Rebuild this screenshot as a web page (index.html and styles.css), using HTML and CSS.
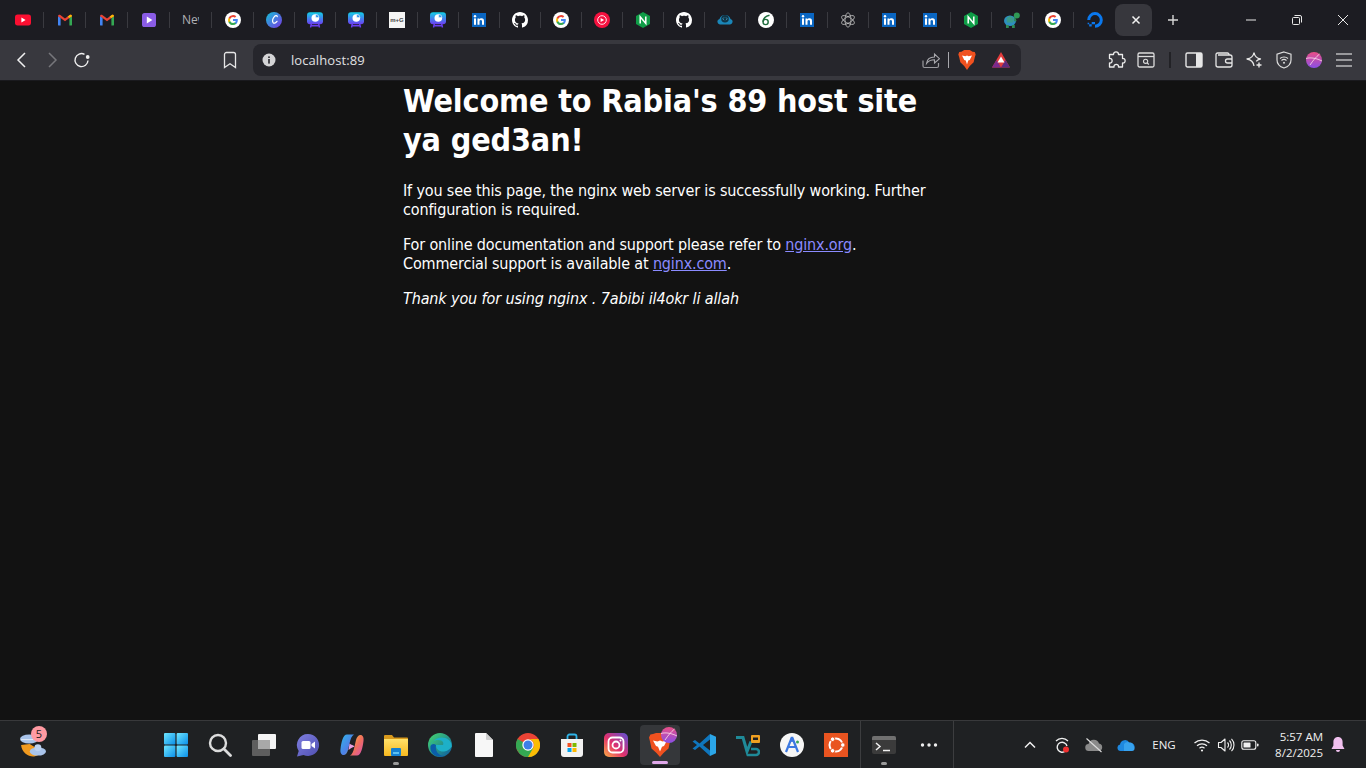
FILE: index.html
```html
<!DOCTYPE html>
<html lang="en">
<head>
<meta charset="utf-8">
<title>Welcome to nginx!</title>
<link rel="stylesheet" href="styles.css">
</head>
<body>
<svg class="defs" aria-hidden="true">
  <defs>
    <linearGradient id="gPresent" x1="0" y1="0" x2="0" y2="1"><stop offset="0" stop-color="#12cfe6"/><stop offset="1" stop-color="#6d3df2"/></linearGradient>
    <linearGradient id="gCanva" x1="0" y1="0" x2="1" y2="1"><stop offset="0" stop-color="#12c4d6"/><stop offset="1" stop-color="#7b34e6"/></linearGradient>
    <linearGradient id="gStart" x1="0" y1="0" x2="1" y2="1"><stop offset="0" stop-color="#6fe6ff"/><stop offset="1" stop-color="#0a8fe8"/></linearGradient>
    <linearGradient id="gMeet" x1="0" y1="0" x2="1" y2="1"><stop offset="0" stop-color="#7f7fe0"/><stop offset="1" stop-color="#4f4fb0"/></linearGradient>
    <linearGradient id="gInsta" x1="0" y1="1" x2="1" y2="0"><stop offset="0" stop-color="#fcb045"/><stop offset=".45" stop-color="#e1306c"/><stop offset="1" stop-color="#5b51d8"/></linearGradient>
    <linearGradient id="gProfile" x1="0" y1="0" x2="0" y2="1"><stop offset="0" stop-color="#ea4f86"/><stop offset="1" stop-color="#8a4fe6"/></linearGradient>
    <linearGradient id="gCop" x1="0" y1="0" x2="1" y2="1"><stop offset="0" stop-color="#2fb6e8"/><stop offset=".6" stop-color="#4f7fe8"/><stop offset="1" stop-color="#9ad65a"/></linearGradient>
    <linearGradient id="gCop2" x1="0" y1="0" x2="1" y2="1"><stop offset="0" stop-color="#f9c043"/><stop offset=".5" stop-color="#f0705a"/><stop offset="1" stop-color="#d64fb5"/></linearGradient>
    <linearGradient id="gEdge" x1="0" y1="0" x2="1" y2="1"><stop offset="0" stop-color="#45d86e"/><stop offset="1" stop-color="#0c59a4"/></linearGradient>
    <linearGradient id="gFolder" x1="0" y1="0" x2="0" y2="1"><stop offset="0" stop-color="#ffe16a"/><stop offset="1" stop-color="#f6b81f"/></linearGradient>

    <symbol id="i-yt" viewBox="0 0 16 16"><rect y="2.600" width="16" height="10.800" rx="2.600" fill="#fb0f31"/><path d="M6.400 5.600 10.600 8l-4.200 2.400z" fill="#fff"/></symbol>
    <symbol id="i-gmail" viewBox="0 0 16 16"><path d="M1 13.600V4l2.600 1.900v7.700H1.900a.9.9 0 0 1-.9-.9z" fill="#4285f4"/><path d="M15 13.600V4l-2.600 1.900v7.700h1.700a.9.9 0 0 0 .9-.9z" fill="#34a853"/><path d="M1 4.200c0-1.200 1.400-1.900 2.300-1.100L8 6.600l4.700-3.500c.9-.8 2.300-.1 2.300 1.100L12.400 6 8 9.300 3.600 6z" fill="#ea4335"/><path d="M12.400 6 15 4.200c0-1.200-1.400-1.900-2.300-1.100L10.600 4.700z" fill="#fbbc04"/></symbol>
    <symbol id="i-play" viewBox="0 0 16 16"><rect x="1" y="1" width="14" height="14" rx="2.600" fill="#8a5ce6"/><path d="M5.800 4.600 11.400 8l-5.600 3.400z" fill="#fff"/></symbol>
    <symbol id="i-google" viewBox="0 0 16 16"><circle cx="8" cy="8" r="8" fill="#fff"/><path d="M12.800 8.100c0-.4 0-.7-.1-1H8v1.900h2.700c-.1.700-.5 1.200-1 1.600v1.300h1.600c1-.9 1.500-2.200 1.500-3.800z" fill="#4285f4"/><path d="M8 13c1.300 0 2.400-.4 3.300-1.200l-1.600-1.200c-.4.300-1 .5-1.700.5-1.300 0-2.400-.9-2.800-2H3.600v1.300C4.400 12 6.100 13 8 13z" fill="#34a853"/><path d="M5.200 9.100c-.2-.7-.2-1.400 0-2.100V5.700H3.600a5 5 0 0 0 0 4.700z" fill="#fbbc04"/><path d="M8 5c.7 0 1.400.3 1.900.7l1.400-1.400A5 5 0 0 0 3.600 5.700L5.200 7c.4-1.200 1.500-2 2.800-2z" fill="#ea4335"/></symbol>
    <symbol id="i-canva" viewBox="0 0 16 16"><circle cx="8" cy="8" r="8" fill="url(#gCanva)"/><path d="M11.300 4.600c-.3-1.300-1.900-1.200-3.100.2-1.500 1.700-2.300 4.800-1 6 1.200 1 2.800-.2 3.800-1.500" fill="none" stroke="#fff" stroke-width="1.200" stroke-linecap="round"/></symbol>
    <symbol id="i-present" viewBox="0 0 16 16"><path d="M4.500 11 3.500 15.500M11.500 11l1 4.500M4 13.800h8" stroke="#6a3ff0" stroke-width="1.400" fill="none"/><rect y=".3" width="16" height="12" rx="3" fill="url(#gPresent)"/><circle cx="8.300" cy="6" r="3.800" fill="#fff"/><path d="M8.700 2.300V5.600H12A3.600 3.600 0 0 0 8.700 2.300z" fill="#2b8fe8" stroke="#fff" stroke-width=".5"/></symbol>
    <symbol id="i-linkedin" viewBox="0 0 16 16"><rect x="1" y="1" width="14" height="14" fill="#0a66c2"/><rect x="3" y="6.400" width="2" height="6.400" fill="#fff"/><circle cx="4" cy="4.300" r="1.200" fill="#fff"/><path d="M6.500 6.400h1.900v.9c.4-.6 1.100-1.100 2.100-1.100 2 0 2.500 1.300 2.500 3v3.600h-2V9.600c0-.8-.1-1.700-1.200-1.700s-1.300.8-1.300 1.700v3.200h-2z" fill="#fff"/></symbol>
    <symbol id="i-github" viewBox="0 0 16 16"><path fill="#fff" d="M8 0C3.580 0 0 3.580 0 8c0 3.540 2.290 6.530 5.470 7.590.4.070.55-.17.550-.38 0-.19-.01-.82-.01-1.490-2.010.37-2.530-.49-2.690-.94-.09-.23-.48-.94-.82-1.130-.28-.15-.68-.52-.01-.53.630-.01 1.080.58 1.230.82.720 1.210 1.870.87 2.330.66.070-.52.280-.87.510-1.070-1.780-.2-3.640-.89-3.640-3.950 0-.87.310-1.590.82-2.150-.08-.2-.36-1.020.08-2.120 0 0 .67-.21 2.200.82.640-.18 1.320-.27 2-.27s1.360.09 2 .27c1.530-1.040 2.200-.82 2.200-.82.440 1.100.16 1.920.08 2.120.51.560.82 1.270.82 2.150 0 3.070-1.870 3.750-3.650 3.950.29.250.54.730.54 1.480 0 1.070-.01 1.930-.01 2.200 0 .21.150.46.550.38A8.010 8.010 0 0 0 16 8c0-4.420-3.580-8-8-8z"/></symbol>
    <symbol id="i-ytm" viewBox="0 0 16 16"><circle cx="8" cy="8" r="8" fill="#f5113f"/><circle cx="8" cy="8" r="4.300" fill="none" stroke="#fff" stroke-width=".9"/><path d="M6.600 5.900 10.200 8l-3.600 2.100z" fill="#fff"/></symbol>
    <symbol id="i-nginx" viewBox="0 0 16 16"><path d="M8 0 15 4v8l-7 4-7-4V4z" fill="#0f9d47"/><path d="M5.200 11.500V4.800l5.600 6.600V4.500" fill="none" stroke="#fff" stroke-width="1.500"/></symbol>
    <symbol id="i-cloud" viewBox="0 0 16 16"><path d="M2.800 12.500a2.800 2.800 0 0 1-.3-5.500A5.800 5.800 0 0 1 13.500 7a2.800 2.800 0 0 1-.3 5.500z" fill="#1a86b8"/><circle cx="8" cy="6.800" r="3.800" fill="#103446"/><path d="M7 5.400 5.800 6.800 7 8.200M9 5.400 10.200 6.800 9 8.200" stroke="#5fc6ea" stroke-width=".6" fill="none"/></symbol>
    <symbol id="i-six" viewBox="0 0 16 16"><circle cx="8" cy="8" r="8" fill="#fff"/><circle cx="7.600" cy="10" r="2.600" fill="none" stroke="#1e6b3c" stroke-width="1.400"/><path d="M5 9.700C5.300 6.500 7.500 4.200 11.500 3.300" fill="none" stroke="#1e6b3c" stroke-width="1.500"/></symbol>
    <symbol id="i-openai" viewBox="0 0 16 16"><g fill="none" stroke="#bdbdbd" stroke-width=".8"><ellipse cx="8" cy="8" rx="3" ry="7.200"/><ellipse cx="8" cy="8" rx="3" ry="7.200" transform="rotate(60 8 8)"/><ellipse cx="8" cy="8" rx="3" ry="7.200" transform="rotate(120 8 8)"/></g></symbol>
    <symbol id="i-turtle" viewBox="0 0 16 16"><ellipse cx="6" cy="8.800" rx="6" ry="5.200" fill="#2d8fc0"/><path d="M2.500 6 6 3.800 9.800 6 9.300 10.500H3z" fill="#3a9a8a"/><circle cx="12.800" cy="3.400" r="3" fill="#2f9a55"/><path d="M10.200 5.500c1.400.7 2.300 2 2.300 3.800H10zM2 13h2.800v3H2zM8 13h2.800v3H8z" fill="#2f8a55"/></symbol>
    <symbol id="i-do" viewBox="0 0 16 16"><path d="M8 15.700v-3a4.800 4.800 0 1 0-4.800-4.800h-3A7.800 7.800 0 1 1 8 15.700z" fill="#0a78ee"/><path d="M4.700 12.300H8v-2.400H4.700zM2.200 14.400h2.500v-2.100H2.200zM.6 12.300h1.600v-1.600H.6z" fill="#0a78ee"/></symbol>
  </defs>
</svg>

<header class="tabbar">
  <div class="tab wide"><svg class="ti"><use href="#i-yt"/></svg></div>
  <div class="tab wide"><svg class="ti"><use href="#i-gmail"/></svg></div>
  <div class="tab wide"><svg class="ti"><use href="#i-gmail"/></svg></div>
  <div class="tab wide"><svg class="ti"><use href="#i-play"/></svg></div>
  <div class="tab wide"><span class="tab-new">New</span></div>
  <div class="tab wide"><svg class="ti"><use href="#i-google"/></svg></div>
  <div class="tab"><svg class="ti"><use href="#i-canva"/></svg></div>
  <div class="tab"><svg class="ti"><use href="#i-present"/></svg></div>
  <div class="tab"><svg class="ti"><use href="#i-present"/></svg></div>
  <div class="tab"><span class="tile">m+G</span></div>
  <div class="tab"><svg class="ti"><use href="#i-present"/></svg></div>
  <div class="tab"><svg class="ti"><use href="#i-linkedin"/></svg></div>
  <div class="tab"><svg class="ti"><use href="#i-github"/></svg></div>
  <div class="tab"><svg class="ti"><use href="#i-google"/></svg></div>
  <div class="tab"><svg class="ti"><use href="#i-ytm"/></svg></div>
  <div class="tab"><svg class="ti"><use href="#i-nginx"/></svg></div>
  <div class="tab"><svg class="ti"><use href="#i-github"/></svg></div>
  <div class="tab"><svg class="ti"><use href="#i-cloud"/></svg></div>
  <div class="tab"><svg class="ti"><use href="#i-six"/></svg></div>
  <div class="tab"><svg class="ti"><use href="#i-linkedin"/></svg></div>
  <div class="tab"><svg class="ti"><use href="#i-openai"/></svg></div>
  <div class="tab"><svg class="ti"><use href="#i-linkedin"/></svg></div>
  <div class="tab"><svg class="ti"><use href="#i-linkedin"/></svg></div>
  <div class="tab"><svg class="ti"><use href="#i-nginx"/></svg></div>
  <div class="tab"><svg class="ti"><use href="#i-turtle"/></svg></div>
  <div class="tab"><svg class="ti"><use href="#i-google"/></svg></div>
  <div class="tab last"><svg class="ti"><use href="#i-do"/></svg></div>
  <div class="tab-active"><svg class="ic10" viewBox="0 0 10 10"><path d="M1.500 1.500l7 7M8.500 1.500l-7 7" stroke="#f2f2f2" stroke-width="1.500" fill="none"/></svg></div>
  <div class="tab-add"><svg class="ic12" viewBox="0 0 12 12"><path d="M6 1v10M1 6h10" stroke="#d8d8d8" stroke-width="1.400" fill="none"/></svg></div>
  <div class="win-ctrls">
    <div class="win-btn"><svg class="ic12" viewBox="0 0 12 12"><path d="M1 6h10" stroke="#e8e8e8" fill="none"/></svg></div>
    <div class="win-btn"><svg class="ic12" viewBox="0 0 12 12"><rect x="1.500" y="3.500" width="7" height="7" rx="1" fill="none" stroke="#e8e8e8"/><path d="M3.500 1.500h5.500a1.500 1.500 0 0 1 1.500 1.500v5.500" fill="none" stroke="#e8e8e8"/></svg></div>
    <div class="win-btn"><svg class="ic12" viewBox="0 0 12 12"><path d="M1 1l10 10M11 1 1 11" stroke="#e8e8e8" fill="none"/></svg></div>
  </div>
</header>

<nav class="toolbar">
  <div class="tool nav-btn"><svg class="ic18" viewBox="0 0 18 18"><path d="M12 2 5 9l7 7" stroke="#f0f0f0" stroke-width="1.500" fill="none"/></svg></div>
  <div class="tool nav-btn"><svg class="ic18" viewBox="0 0 18 18"><path d="M6 2l7 7-7 7" stroke="#77777b" stroke-width="1.500" fill="none"/></svg></div>
  <div class="tool nav-btn"><svg class="ic18" viewBox="0 0 18 18"><path d="M15 9.500A6.500 6.500 0 1 1 11.500 3.300" stroke="#f0f0f0" stroke-width="1.400" fill="none"/><circle cx="14.700" cy="6" r="1.900" fill="#f0f0f0"/></svg></div>
  <div class="tool bookmark"><svg class="ic18" viewBox="0 0 18 18"><path d="M3.500 3.500A2 2 0 0 1 5.500 1.500h7a2 2 0 0 1 2 2V16.500L9 12.800 3.500 16.500z" stroke="#e6e6e6" stroke-width="1.300" fill="none"/></svg></div>
  <div class="urlbar">
    <svg class="url-info" viewBox="0 0 14 14"><circle cx="7" cy="7" r="6.500" fill="#d4d4d6"/><rect x="6.200" y="6" width="1.600" height="4.600" fill="#25252b"/><rect x="6.200" y="3.400" width="1.600" height="1.600" fill="#25252b"/></svg>
    <span class="url-text">localhost:89</span>
    <svg class="url-share" viewBox="0 0 18 18"><path d="M1 9.500V15a1.500 1.500 0 0 0 1.500 1.500H15A1.500 1.500 0 0 0 16.500 15v-3" stroke="#9a9a9f" stroke-width="1.200" fill="none"/><path d="M4.500 12.500C5 8 8 6 12.500 6V3l5 4.700-5 4.300v-3.200c-3.500 0-6 1-8 3.700z" stroke="#a8a8ad" stroke-width="1.100" fill="none"/></svg>
    <span class="url-sep"></span>
    <svg class="url-brave" viewBox="0 0 16 18"><path d="M3 1.500 5.500 0h5L13 1.500l2 .3.800 2.200-.8 2.500-1 4.500-3.500 3.500L8 18l-2.500-3.500L2 11 1 6.500.2 4 1 1.800z" fill="#f0511f"/><path d="M3.500 5 6.500 5.600 8 5l1.500.6 3-.6-2 4-1.400.4L8 13 6.900 9.400 5.500 9z" fill="#fff"/></svg>
    <svg class="url-bat" viewBox="0 0 18 16"><path d="M0 15.500 9 0l9 15.500z" fill="#e23b3b"/><path d="M0 15.500 4.500 8 9 15.500z" fill="#7a2a8c"/><path d="M18 15.500 13.500 8 9 15.500z" fill="#5c2a80"/><path d="M5.500 10.500 9 4.500l3.500 6z" fill="#fff"/></svg>
  </div>
  <div class="tool ext-a"><svg class="ic20" viewBox="0 0 20 20"><path d="M7.500 4.500C7.500 1 12.500 1 12.500 4.500H16.500V8.500C20 8 20 13.500 16.500 13v4H12.500C13 13.500 7.500 13.500 8 17H3.500V13C7 13.500 7 8 3.500 8.500V4.500z" stroke="#ececec" stroke-width="1.300" fill="none" stroke-linejoin="round"/></svg></div>
  <div class="tool ext-b"><svg class="ic18" viewBox="0 0 18 18"><rect x="1" y="2" width="16" height="14" rx="1.500" stroke="#dcdcdc" stroke-width="1.300" fill="none"/><path d="M1 5.500h16" stroke="#dcdcdc" stroke-width="1.300"/><circle cx="8.600" cy="10.300" r="2.100" stroke="#dcdcdc" stroke-width="1.100" fill="none"/><path d="M10.200 12l1.700 1.500" stroke="#dcdcdc" stroke-width="1.100"/></svg></div>
  <span class="tool-sep"></span>
  <div class="tool t-side"><svg class="ic18" viewBox="0 0 18 18"><rect x="1" y="2" width="16" height="14" rx="1.500" stroke="#e6e6e6" stroke-width="1.400" fill="none"/><rect x="11" y="2" width="6" height="14" fill="#e6e6e6"/></svg></div>
  <div class="tool t-wallet"><svg class="ic18" viewBox="0 0 18 18"><path d="M14 4V3.500A1.500 1.500 0 0 0 12.500 2H2.500A1.500 1.500 0 0 0 1 3.500V14a2 2 0 0 0 2 2h12a2 2 0 0 0 2-2V6a2 2 0 0 0-2-2H3" stroke="#e6e6e6" stroke-width="1.300" fill="none"/><path d="M17 8h-4.500a2 2 0 0 0 0 4H17" stroke="#e6e6e6" stroke-width="1.300" fill="none"/></svg></div>
  <div class="tool t-ai"><svg class="ic18" viewBox="0 0 18 18"><path d="M9 1.500c.6 3.700 2.500 5.800 6.500 6.500-2 .4-3.300 1.100-4.300 2.400M9 1.500C8.400 5.200 6.500 7.300 2 8c4.500.8 6.400 2.800 7 7" stroke="#e6e6e6" stroke-width="1.300" fill="none" stroke-linejoin="round"/><path d="M14 11.500v5M11.500 14h5" stroke="#e6e6e6" stroke-width="1.400"/></svg></div>
  <div class="tool t-vpn"><svg class="ic18" viewBox="0 0 18 18"><path d="M9 1 16 3.200V9c0 4-3 6.700-7 8-4-1.300-7-4-7-8V3.200z" stroke="#dcdcdc" stroke-width="1.200" fill="none"/><path d="M5 7.500c2.200-2 5.800-2 8 0M6.500 9.500c1.400-1.200 3.600-1.200 5 0" stroke="#dcdcdc" stroke-width="1.100" fill="none"/><circle cx="9" cy="11.700" r="1" fill="#dcdcdc"/></svg></div>
  <div class="tool t-prof"><svg class="ic16" viewBox="0 0 16 16"><circle cx="8" cy="8" r="8" fill="url(#gProfile)"/><path d="M0 6.500c5-1.500 11 0 16 2.500M4 13c3-4.500 6-8 9.500-11" stroke="#f7d0e4" stroke-width=".9" fill="none"/></svg></div>
  <div class="tool t-menu"><svg class="ic18" viewBox="0 0 18 18"><path d="M1 3h16M1 9h16M1 15h16" stroke="#b9b9bc" stroke-width="1.600"/></svg></div>
</nav>

<main class="page">
  <div class="content">
    <h1>Welcome to Rabia's 89 host site ya ged3an!</h1>
    <p>If you see this page, the nginx web server is successfully working. Further configuration is required.</p>
    <p>For online documentation and support please refer to <a href="#">nginx.org</a>.<br>Commercial support is available at <a href="#">nginx.com</a>.</p>
    <p><em>Thank you for using nginx . 7abibi il4okr li allah</em></p>
  </div>
</main>

<footer class="taskbar">
  <div class="widgets">
    <div class="widget"><svg class="ic26" viewBox="0 0 24 24"><path d="M1 12c.5 7 7 11 12 10.500 3.500-.3 6-2 7-4.500L9 11z" fill="#f09a1f"/><ellipse cx="8.500" cy="6.500" rx="8.500" ry="4.200" fill="#a9c4ea"/><path d="M1 7h15" stroke="#dfe9f8" stroke-width="1"/><ellipse cx="16.500" cy="18" rx="7.500" ry="3.800" fill="#a9c4ea"/><circle cx="16.500" cy="14.500" r="3.200" fill="#bcd2f0"/></svg><span class="badge">5</span></div>
  </div>
  <div class="apps">
    <div class="app"><svg class="ic24" viewBox="0 0 24 24"><rect x="0" y="0" width="11.400" height="11.400" rx="1" fill="url(#gStart)"/><rect x="12.600" y="0" width="11.400" height="11.400" rx="1" fill="url(#gStart)"/><rect x="0" y="12.600" width="11.400" height="11.400" rx="1" fill="url(#gStart)"/><rect x="12.600" y="12.600" width="11.400" height="11.400" rx="1" fill="url(#gStart)"/></svg></div>
    <div class="app"><svg class="ic24" viewBox="0 0 24 24"><circle cx="10" cy="10" r="8" stroke="#dcdcdc" stroke-width="2.400" fill="none"/><path d="M16 16l6.500 6.500" stroke="#dcdcdc" stroke-width="2.800" stroke-linecap="round"/></svg></div>
    <div class="app"><svg class="ic24" viewBox="0 0 24 24"><rect x="6" y="1" width="18" height="15" rx="1" fill="#f4f4f4"/><rect x="0" y="7" width="18" height="16" rx="1" fill="#5e5e5e"/><rect x="6" y="7" width="12" height="9" fill="#a9a9a9"/></svg></div>
    <div class="app"><svg class="ic24" viewBox="0 0 24 24"><path d="M12 1a11 11 0 1 1-4.500 21L1 23.500 2.700 18A11 11 0 0 1 12 1z" fill="url(#gMeet)"/><rect x="5.500" y="8" width="9" height="8" rx="1.500" fill="#fff"/><path d="M15.500 11 19 8.500v7L15.500 13z" fill="#fff"/></svg></div>
    <div class="app"><svg class="ic24" viewBox="0 0 24 24"><path d="M7 1.500h7c-2 1-3.500 4-4.500 9L8 17c-.7 3-2.500 5-4.500 5C1.200 22 0 19.500 .5 16 1.300 9.500 3 1.500 7 1.500z" fill="url(#gCop)"/><path d="M17 22.500h-7c2-1 3.500-4 4.500-9L16 7c.7-3 2.500-5 4.500-5C22.800 2 24 4.500 23.500 8 22.700 14.500 21 22.500 17 22.500z" fill="url(#gCop2)"/><path d="M9.500 10.500c2 1.500 3.500 1.500 5 3-1 .5-3 1-6 3.500z" fill="#e8a0e0"/></svg></div>
    <div class="app has-dot"><svg class="ic24" viewBox="0 0 24 24"><path d="M0 3a1 1 0 0 1 1-1h7l2 2.500h13a1 1 0 0 1 1 1V9H0z" fill="#d89a1d"/><path d="M0 6h24v16a1 1 0 0 1-1 1H1a1 1 0 0 1-1-1z" fill="url(#gFolder)"/><rect x="7" y="15" width="10" height="8" rx="1" fill="#1480d0"/><rect x="9" y="19" width="6" height="2" fill="#5cc0f0"/></svg><span class="dot"></span></div>
    <div class="app"><svg class="ic24" viewBox="0 0 24 24"><circle cx="12" cy="12" r="12" fill="url(#gEdge)"/><path d="M23.800 13.500c-.2-6-5-9-10-9-6 0-10 4-11 9C3 9 6 7 10 7c5 0 6 3 5 5h-7c0 4 3 6.500 7 6.500 3 0 6-1 8.800-5z" fill="#1db0c8"/><path d="M8 12c-1 5 2 11 8 11-3 1-8 1-11-2-2-2-3-5-2.500-8C3.500 11 6 10 8 12z" fill="#0b5da8"/></svg></div>
    <div class="app"><svg class="ic24" viewBox="0 0 24 24"><path d="M4 0h10l7 7v16a1 1 0 0 1-1 1H4a1 1 0 0 1-1-1V1a1 1 0 0 1 1-1z" fill="#f7f7f7"/><path d="M14 0l7 7h-6a1 1 0 0 1-1-1z" fill="#cfcfcf"/></svg></div>
    <div class="app"><svg class="ic24" viewBox="0 0 24 24"><circle cx="12" cy="12" r="12" fill="#ea4335"/><path d="M12 12 1.600 18A12 12 0 0 0 12 24 12 12 0 0 0 22.400 18z" fill="#34a853"/><path d="M12 6h10.400A12 12 0 0 1 12 24l5.200-9A6 6 0 0 0 12 6z" fill="#fbbc04"/><path d="M1.600 6A12 12 0 0 0 1.600 18L12 12z" fill="#34a853"/><circle cx="12" cy="12" r="5.700" fill="#fff"/><circle cx="12" cy="12" r="4.500" fill="#3d7fe8"/></svg></div>
    <div class="app"><svg class="ic24" viewBox="0 0 24 24"><path d="M7.500 7V3.500a2 2 0 0 1 2-2h5a2 2 0 0 1 2 2V7" stroke="#2fb4e8" stroke-width="1.800" fill="none"/><path d="M1 6h22v15a3 3 0 0 1-3 3H4a3 3 0 0 1-3-3z" fill="#f2f2f2"/><rect x="7.500" y="10" width="4" height="4" fill="#f25022"/><rect x="12.500" y="10" width="4" height="4" fill="#7fba00"/><rect x="7.500" y="15" width="4" height="4" fill="#00a4ef"/><rect x="12.500" y="15" width="4" height="4" fill="#ffb900"/></svg></div>
    <div class="app"><svg class="ic24" viewBox="0 0 24 24"><rect width="24" height="24" rx="5" fill="url(#gInsta)"/><rect x="4.500" y="4.500" width="15" height="15" rx="4" stroke="#fff" stroke-width="1.800" fill="none"/><circle cx="12" cy="12" r="3.500" stroke="#fff" stroke-width="1.800" fill="none"/><circle cx="16.500" cy="7.500" r="1" fill="#fff"/></svg></div>
    <div class="app active"><svg class="ic24" viewBox="0 0 24 24"><path d="M5 1 8 0h8l3 1 2.600.5 1.400 3-1 4-1.500 7-5 4.500L12 24l-3.500-4L3.500 15.500 2 8.500 1 4.500l1.400-3z" fill="#f0511f"/><path d="M5 7.500 9.500 8.500 12 7.500 14.500 8.500 19 7.500 16 13l-2 .8L12 18.500 10 13.800 8 13z" fill="#fff"/></svg><svg class="brave-prof" viewBox="0 0 16 16"><circle cx="8" cy="8" r="8" fill="url(#gProfile)"/><path d="M0 6.500c5-1.500 11 0 16 2.500M4 13c3-4.500 6-8 9.500-11" stroke="#f7d0e4" stroke-width=".9" fill="none"/></svg><span class="active-bar"></span></div>
    <div class="app"><svg class="ic24" viewBox="0 0 24 24"><path d="M18 1 7.500 10.500 3 7 .5 8.500 5 12 .5 15.500 3 17 7.500 13.500 18 23V17.500L11 12 18 6.500z" fill="#0f76bd"/><path d="M18 1 24 3.800V20.200L18 23z" fill="#2ba6e8"/></svg></div>
    <div class="app"><svg class="ic24" viewBox="0 0 24 24"><path d="M0 4.500h7l4 14 4-10" stroke="#1f8a98" stroke-width="3" fill="none"/><path d="M11 22h9a3 3 0 0 0 0-6h-5" stroke="#1f8a98" stroke-width="2.600" fill="none"/><rect x="15" y="2" width="9" height="8" rx="1" fill="#f0a020"/><rect x="17" y="4.500" width="5" height="2.500" fill="#1c1e20"/></svg></div>
    <div class="app"><svg class="ic24" viewBox="0 0 24 24"><circle cx="12" cy="12" r="12" fill="#f6f6f6"/><path d="M12 4 6 19M12 4l6 15M8.500 14h7" stroke="#3b78e0" stroke-width="2.200" fill="none"/><circle cx="12" cy="7" r="2" fill="#3b78e0"/><circle cx="17.500" cy="9" r="1.500" fill="#3aa757"/></svg></div>
    <div class="app"><svg class="ic24" viewBox="0 0 24 24"><rect width="24" height="24" fill="#e95420"/><circle cx="12" cy="12" r="6.500" stroke="#fff" stroke-width="2" fill="none"/><circle cx="18.800" cy="12" r="2.300" fill="#fff" stroke="#e95420"/><circle cx="8.600" cy="6.200" r="2.300" fill="#fff" stroke="#e95420"/><circle cx="8.600" cy="17.800" r="2.300" fill="#fff" stroke="#e95420"/></svg></div>
    <span class="task-sep sep-a"></span>
    <div class="app has-dot"><svg class="ic24" viewBox="0 0 24 24"><rect y="3" width="24" height="18" rx="2" fill="#3b3b3b"/><path d="M2 3h20a2 2 0 0 1 2 2v2H0V5a2 2 0 0 1 2-2z" fill="#707070"/><path d="M4 10l4 3.500L4 17" stroke="#f0f0f0" stroke-width="1.500" fill="none"/><path d="M11 17.500h7" stroke="#f0f0f0" stroke-width="1.500"/></svg><span class="dot"></span></div>
    <div class="app more"><svg class="ic18" viewBox="0 0 18 18"><circle cx="2.500" cy="9" r="1.700" fill="#eee"/><circle cx="9" cy="9" r="1.700" fill="#eee"/><circle cx="15.500" cy="9" r="1.700" fill="#eee"/></svg></div>
    <span class="task-sep sep-b"></span>
  </div>
  <div class="tray">
    <div class="tray-i ti-chev"><svg class="ic12" viewBox="0 0 12 12"><path d="M1 8.500 6 3.500l5 5" stroke="#f0f0f0" stroke-width="1.500" fill="none"/></svg></div>
    <div class="tray-i ti-rec"><svg class="ic18" viewBox="0 0 18 18"><path d="M3 5a8 8 0 0 1 12 0" stroke="#f0f0f0" stroke-width="1.200" fill="none"/><path d="M12.500 15A5 5 0 1 1 14 10" stroke="#f0f0f0" stroke-width="1.400" fill="none"/><circle cx="13" cy="13.500" r="3" fill="#f03030"/></svg></div>
    <div class="tray-i ti-cloud1"><svg class="ic18" viewBox="0 0 18 18"><path d="M4 15a3.500 3.500 0 0 1-.5-7A5.500 5.500 0 0 1 14 7.500a3.800 3.800 0 0 1 0 7.500z" fill="#8a8a8a"/><path d="M1.500 2.500 16.500 16" stroke="#dcdcdc" stroke-width="1.200"/></svg></div>
    <div class="tray-i ti-cloud2"><svg class="ic18" viewBox="0 0 18 18"><path d="M3.500 15a3.300 3.300 0 0 1-.5-6.500A5 5 0 0 1 12.500 7a4 4 0 0 1 2 8z" fill="#1e88e0"/><path d="M7 8a4.800 4.800 0 0 1 6-1.500 3.800 3.800 0 0 1 3.500 3.300C18 12 18 15 15 15H7z" fill="#37a2ee"/></svg></div>
    <span class="tray-lang">ENG</span>
    <div class="tray-i ti-wifi"><svg class="ic18" viewBox="0 0 18 18"><path d="M1.500 7a11 11 0 0 1 15 0M4 9.700a7.500 7.500 0 0 1 10 0M6.500 12.200a3.800 3.800 0 0 1 5 0" stroke="#f0f0f0" stroke-width="1.200" fill="none"/><circle cx="9" cy="14.500" r="1.100" fill="#f0f0f0"/></svg></div>
    <div class="tray-i ti-vol"><svg class="ic18" viewBox="0 0 18 18"><path d="M1.500 6.500h2.500L8 3v12l-4-3.500H1.500z" stroke="#f0f0f0" stroke-width="1.100" fill="none" stroke-linejoin="round"/><path d="M10.500 6.500a3.500 3.500 0 0 1 0 5M12.500 4.500a6.500 6.500 0 0 1 0 9M14.500 2.800a9 9 0 0 1 0 12.400" stroke="#f0f0f0" stroke-width="1.100" fill="none"/></svg></div>
    <div class="tray-i ti-bat"><svg class="ic18" viewBox="0 0 18 18"><rect x=".8" y="4.800" width="14" height="8.400" rx="2" stroke="#f0f0f0" stroke-width="1.100" fill="none"/><rect x="2.500" y="6.500" width="7" height="5" rx=".6" fill="#f0f0f0"/><rect x="16" y="7.500" width="1.500" height="3" rx=".7" fill="#f0f0f0"/></svg></div>
    <div class="clock"><span>5:57 AM</span><span>8/2/2025</span></div>
    <div class="tray-i ti-bell"><svg class="ic16" viewBox="0 0 16 16"><path d="M8 0c3 0 4.600 2.300 4.600 5v3.500L14.500 12h-13l1.900-3.500V5C3.400 2.300 5 0 8 0z" fill="#f0c0ee"/><path d="M6 13h4a2 2 0 0 1-4 0z" fill="#f0c0ee"/></svg></div>
  </div>
</footer>
</body>
</html>
```

FILE: styles.css
```css
* { box-sizing: border-box; }
html, body { margin: 0; padding: 0; height: 100%; }
body {
  width: 1366px;
  height: 768px;
  overflow: hidden;
  display: flex;
  flex-direction: column;
  background: #121212;
  font-family: "Open Sans", "Noto Sans", sans-serif;
}
.defs { display: block; width: 0; height: 0; }

.ti { width: 16px; height: 16px; display: block; }
.ic10 { width: 10px; height: 10px; display: block; }
.ic12 { width: 12px; height: 12px; display: block; }
.ic16 { width: 16px; height: 16px; display: block; }
.ic18 { width: 18px; height: 18px; display: block; }
.ic20 { width: 20px; height: 20px; display: block; }
.ic24 { width: 24px; height: 24px; display: block; }
.ic26 { width: 26px; height: 26px; display: block; }

/* tab strip */
.tabbar {
  height: 40px;
  flex: none;
  display: flex;
  align-items: center;
  padding-left: 2px;
  background: #1c1c22;
}
.tab {
  width: 41px;
  height: 16px;
  flex: none;
  display: flex;
  align-items: center;
  justify-content: center;
  border-right: 1px solid #3a3a40;
}
.tab.wide { width: 42px; }
.tab.last { border-right: 0; }
.tab-new {
  width: 17px;
  overflow: hidden;
  font-size: 12px;
  line-height: 16px;
  color: #b0b0b4;
  white-space: nowrap;
}
.tile {
  width: 16px;
  height: 16px;
  display: block;
  background: #f4f4f4;
  color: #444;
  font: 700 6px/16px "Liberation Sans", sans-serif;
  text-align: center;
  white-space: nowrap;
}
.tab-active {
  width: 37px;
  height: 32px;
  flex: none;
  padding-left: 5px;
  display: flex;
  align-items: center;
  justify-content: center;
  border-radius: 8px;
  background: #37373d;
}
.tab-add {
  width: 42px;
  flex: none;
  display: flex;
  justify-content: center;
}
.win-ctrls { margin-left: auto; display: flex; }
.win-btn {
  width: 46px;
  height: 32px;
  display: flex;
  align-items: center;
  justify-content: center;
}

/* toolbar */
.toolbar {
  height: 41px;
  flex: none;
  display: flex;
  align-items: center;
  padding: 0 0 1px 7px;
  background: #38383e;
  border-bottom: 1px solid #1a1a1e;
}
.tool {
  flex: none;
  width: 30px;
  height: 30px;
  display: flex;
  align-items: center;
  justify-content: center;
}
.bookmark { margin-left: 118px; margin-right: 8px; }
.urlbar {
  width: 768px;
  height: 32px;
  flex: none;
  display: flex;
  align-items: center;
  padding-left: 9px;
  border-radius: 8px;
  background: #26262c;
}
.url-info { width: 14px; height: 14px; flex: none; }
.url-text {
  margin-left: 15px;
  font-size: 13px;
  letter-spacing: .08px;
  color: #e0e0e2;
}
.url-share { width: 18px; height: 18px; flex: none; margin-left: auto; }
.url-sep { width: 1px; height: 16px; flex: none; margin: 0 9px 0 8px; background: #a8a8ad; }
.url-brave { width: 18px; height: 20px; flex: none; }
.url-bat { width: 18px; height: 16px; flex: none; margin: 0 11px 0 16px; }
.ext-a { margin-left: 80px; }
.tool-sep { width: 2px; height: 16px; flex: none; margin: 0 8px; background: #222226; }

/* page */
.page { flex: 1; min-height: 0; background: #121212; }
.content {
  width: 560px;
  margin: 0 auto;
  color: #fff;
  font-family: "DejaVu Sans", sans-serif;
  font-stretch: condensed;
  font-size: 16px;
  line-height: 19px;
  letter-spacing: -.15px;
}
.content h1 {
  margin: 0 0 21px;
  padding-top: 1px;
  font-size: 32px;
  line-height: 39px;
  font-weight: 700;
  letter-spacing: -.16px;
}
.content p { margin: 0 0 16px; }
.content em { letter-spacing: -.125px; }
.content a { color: #8b8bff; }

/* taskbar */
.taskbar {
  height: 48px;
  flex: none;
  display: flex;
  align-items: center;
  background: #1f2123;
  border-top: 1px solid #38393b;
}
.widgets { width: 154px; flex: none; padding-left: 11px; }
.widget {
  position: relative;
  width: 44px;
  height: 40px;
  display: flex;
  align-items: center;
  justify-content: center;
}
.badge {
  position: absolute;
  top: 1px;
  right: 8px;
  width: 16px;
  height: 16px;
  border-radius: 50%;
  background: #ff9aa2;
  color: #1c1c1c;
  font-size: 11px;
  line-height: 16px;
  text-align: center;
}
.apps { display: flex; align-items: center; flex: none; }
.app {
  position: relative;
  width: 44px;
  height: 40px;
  flex: none;
  display: flex;
  align-items: center;
  justify-content: center;
}
.app.active {
  margin: 0 2px;
  width: 40px;
  border-radius: 4px;
  background: #35373a;
}
.app.more { margin-left: 1px; }
.brave-prof {
  position: absolute;
  top: 2px;
  right: 3px;
  width: 16px;
  height: 16px;
}
.active-bar {
  position: absolute;
  bottom: 1px;
  left: 12px;
  width: 16px;
  height: 3px;
  border-radius: 2px;
  background: #e0a8ea;
}
.dot {
  position: absolute;
  bottom: 0;
  left: 19px;
  width: 6px;
  height: 3px;
  border-radius: 2px;
  background: #9a9a9a;
}
.task-sep { width: 1px; height: 47px; flex: none; background: #3c3d3f; }
.sep-a { margin: 0 1px 0 2px; }
.sep-b { margin-left: 2px; }
.tray {
  flex: 1;
  display: flex;
  align-items: center;
  padding-left: 60px;
}
.tray-i {
  width: 32px;
  height: 32px;
  flex: none;
  display: flex;
  align-items: center;
  justify-content: center;
}
.tray-lang {
  width: 44px;
  flex: none;
  margin-right: 4px;
  color: #f0f0f0;
  font-size: 11.500px;
  text-align: center;
}
.ti-wifi, .ti-vol, .ti-bat { width: 24px; }
.clock {
  width: 61px;
  flex: none;
  display: flex;
  flex-direction: column;
  align-items: flex-end;
  color: #f0f0f0;
  font-size: 11.500px;
  line-height: 16px;
  white-space: nowrap;
}
.ti-bell { width: 30px; }
```
